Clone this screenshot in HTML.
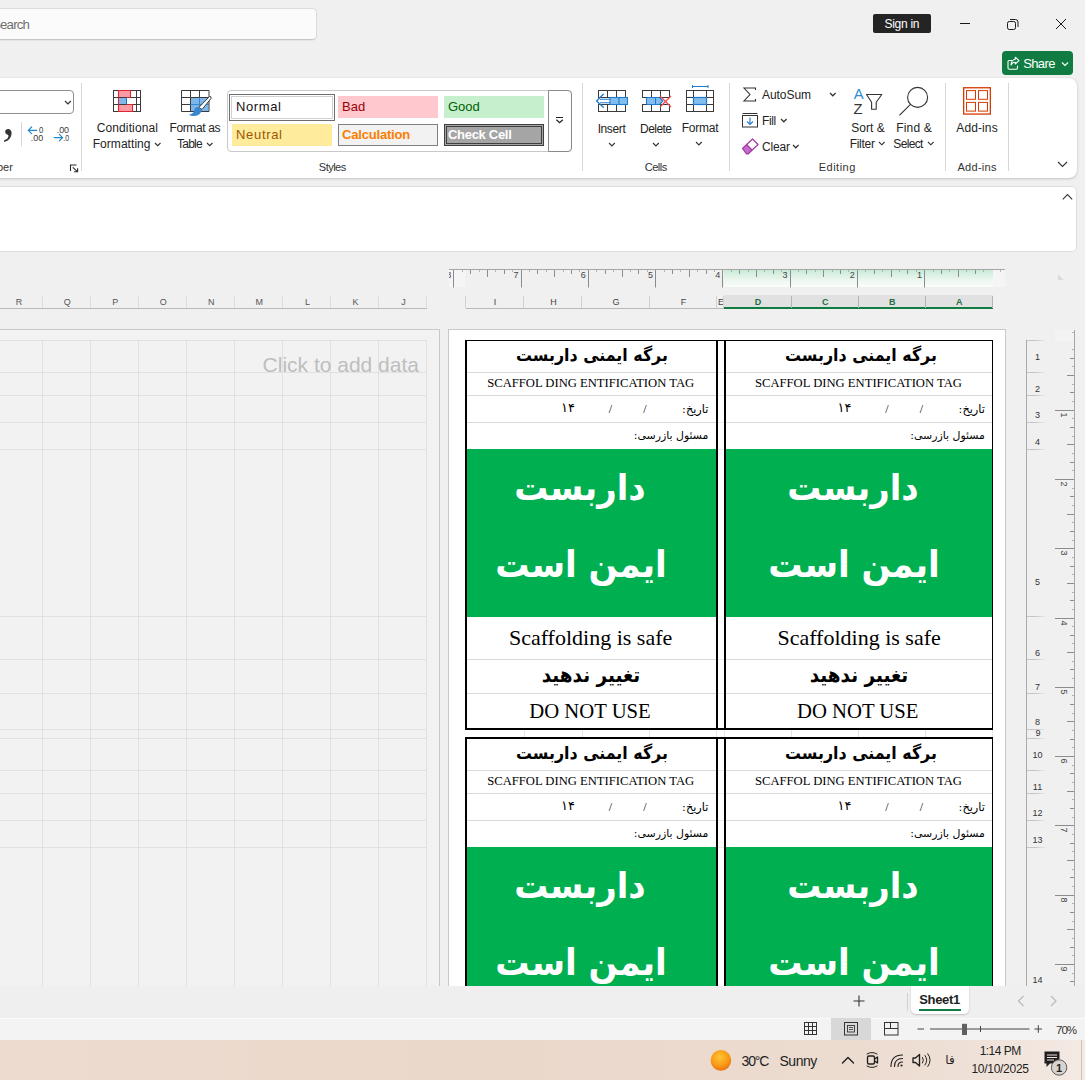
<!DOCTYPE html>
<html lang="en"><head><meta charset="utf-8"><title>Excel</title><style>
*{box-sizing:border-box;margin:0;padding:0}
html,body{width:1085px;height:1080px;overflow:hidden;background:#f0f0f0}
body{position:relative;font-family:"Liberation Sans","DejaVu Sans",sans-serif;font-size:12px;color:#242424}
div,svg{position:absolute}
.t{white-space:pre}
.fa{font-family:"DejaVu Sans",sans-serif;direction:rtl;unicode-bidi:plaintext}
.se{font-family:"Liberation Serif",serif}
svg{overflow:visible}
</style></head><body>
<div style="left:0px;top:0px;width:1085px;height:78px;background:#f0f0f0;"></div>
<div style="left:-10px;top:8px;width:327px;height:32px;background:#fbfbfb;border:1px solid #dcdcdc;border-bottom-color:#c6c6c6;border-radius:5px;box-shadow:0 1px 1px rgba(0,0,0,.05);"></div>
<div class="t" style="top:15.00px;line-height:19px;font-size:13.3px;color:#707070;letter-spacing:-0.828px;right:1055.83px;text-align:right;">Search</div>
<div style="left:873px;top:14px;width:58px;height:19px;background:#242424;border-radius:2px;"></div>
<div class="t" style="top:16.00px;line-height:17px;font-size:12px;color:#fff;letter-spacing:-0.282px;left:601.86px;width:600px;text-align:center;">Sign in</div>
<svg style="left:955px;top:14px" width="120" height="20" viewBox="955 14 120 20" fill="none" stroke="#1a1a1a" stroke-width="1"><path d="M960 23.5H970"/><rect x="1007.5" y="21.5" width="8" height="8" rx="1.8"/><path d="M1010 19.5H1015.5Q1018 19.5 1018 22V27"/><path d="M1056 19L1066 29M1066 19L1056 29"/></svg>
<div style="left:1002px;top:51px;width:71px;height:24px;background:#107c41;border-radius:4px;"></div>
<svg style="left:1006px;top:55px" width="18" height="17" viewBox="0 0 18 17" fill="none" stroke="#fff" stroke-width="1.1" stroke-linejoin="round" stroke-linecap="round"><path d="M5.5 5.5H3.2Q2 5.5 2 6.7V13Q2 14.2 3.2 14.2H10.3Q11.5 14.2 11.5 13V11"/><path d="M9.3 2.2L13 5.6L9.3 9V7.2Q6.4 7.2 5 10Q5.2 4.8 9.3 4.2Z"/></svg>
<div class="t" style="top:54.50px;line-height:18px;font-size:13px;color:#fff;letter-spacing:-0.623px;left:738.99px;width:600px;text-align:center;">Share</div>
<svg style="left:1061px;top:61px" width="8" height="6" viewBox="0 0 8 6" fill="none" stroke="#fff" stroke-width="1.1"><path d="M1 1.5L4 4.5L7 1.5"/></svg>
<div style="left:-10px;top:78px;width:1087px;height:99.8px;background:#fff;border-radius:8px;box-shadow:0 1px 3px rgba(0,0,0,.18),0 0 1px rgba(0,0,0,.12);"></div>
<div style="left:81.0px;top:83px;width:1px;height:88px;background:#d6d6d6;"></div>
<div style="left:582.0px;top:83px;width:1px;height:88px;background:#d6d6d6;"></div>
<div style="left:729.0px;top:83px;width:1px;height:88px;background:#d6d6d6;"></div>
<div style="left:945.0px;top:83px;width:1px;height:88px;background:#d6d6d6;"></div>
<div style="left:1008.0px;top:83px;width:1px;height:88px;background:#d6d6d6;"></div>
<div style="left:-10px;top:90px;width:84px;height:24px;border:1px solid #8f8f8f;border-radius:4px;background:#fff;"></div>
<svg style="left:63.7px;top:100.0px" width="7.8" height="4.9" viewBox="-1 -1 7.8 4.9" fill="none" stroke="#333" stroke-width="1.2"><path d="M0 0L2.9 2.9L5.8 0"/></svg>
<div class="t se" style="top:96.50px;line-height:40px;font-size:50px;color:#333;left:2.20px;text-align:left;font-family:"Liberation Serif",serif;font-weight:bold;">,</div>
<div style="left:21px;top:122px;width:1px;height:23.5px;background:#d6d6d6;"></div>
<svg style="left:26px;top:122px" width="48" height="22" viewBox="26 122 48 22"><g fill="none" stroke="#1e8bcd" stroke-width="1.2" stroke-linecap="round" stroke-linejoin="round"><path d="M28.4 130.3H36.8M31.6 127L28.3 130.3L31.6 133.6"/><path d="M54.2 137.6H62.4M59.3 134.3L62.6 137.6L59.3 140.9"/></g><g font-family="Liberation Sans,sans-serif" font-size="9.3" fill="#3b3b3b"><text x="39" y="132.5" textLength="4.3" lengthAdjust="spacingAndGlyphs">0</text><text x="30.8" y="141" textLength="12.4" lengthAdjust="spacingAndGlyphs">.00</text><text x="56.7" y="132.5" textLength="12.4" lengthAdjust="spacingAndGlyphs">.00</text><text x="63.3" y="141" textLength="5.8" lengthAdjust="spacingAndGlyphs">.0</text></g></svg>
<div class="t" style="top:160.00px;line-height:15px;font-size:11px;color:#333;letter-spacing:-0.025px;right:1072.22px;text-align:right;">Number</div>
<svg style="left:69px;top:164px" width="10" height="9" viewBox="0 0 10 9" fill="none" stroke="#2b2b2b" stroke-width="1.1"><path d="M1.5 7V1H7.5"/><path d="M3.8 3.4L8.5 7.6M8.6 4.2V7.8H5"/></svg>
<svg style="left:113px;top:90px" width="28" height="22" viewBox="0 0 28 22"><rect x="5.5" y="0.5" width="12" height="7" fill="#fc9aa5"/><rect x="5.5" y="7.5" width="8" height="7" fill="#7fb9ec"/><rect x="5.5" y="14.5" width="14" height="7" fill="#fc9aa5"/><g fill="none" stroke="#3b3b3b" stroke-width="1"><rect x="0.5" y="0.5" width="27" height="21"/><path d="M0.5 7.5H27.5M0.5 14.5H27.5M5.5 0.5V21.5M23.5 0.5V21.5"/></g><path d="M13.5 7.5V14.5" stroke="#1f6fc0" stroke-width="1" fill="none"/><path d="M5.5 7.5V0.5H17.5V7.5H13.5M13.5 14.5H19.5V21.5H5.5V14.5" fill="none" stroke="#e0262f" stroke-width="1.1"/><path d="M5.5 7.5V14.5" stroke="#e0262f" stroke-width="1.1"/></svg>
<div class="t" style="top:120.20px;line-height:17px;font-size:12px;color:#242424;letter-spacing:0.126px;left:-172.64px;width:600px;text-align:center;">Conditional</div>
<div class="t" style="top:136.10px;line-height:17px;font-size:12px;color:#242424;letter-spacing:0.050px;left:-178.38px;width:600px;text-align:center;">Formatting</div>
<svg style="left:153.8px;top:141.6px" width="7.5" height="4.75" viewBox="-1 -1 7.5 4.75" fill="none" stroke="#333" stroke-width="1.1"><path d="M0 0L2.75 2.75L5.5 0"/></svg>
<svg style="left:181px;top:90px" width="32" height="27" viewBox="0 0 32 27"><rect x="9.5" y="7.5" width="18" height="14" fill="#7db7ea"/><g fill="none" stroke="#3b3b3b" stroke-width="1"><path d="M0.5 0.5H28V21.5H0.5Z"/><path d="M0.5 7.5H28M0.5 14.5H28M9.5 0.5V21.5M18.5 0.5V21.5"/></g><path d="M9.5 14.5H28M18.5 7.5V21.5" stroke="#3a86cf" stroke-width="1" fill="none"/><path d="M28.5 6.5Q30.5 6 30 8.5L21 19.5L17.8 17.5Z" fill="#fff" stroke="#3b3b3b" stroke-width="1" stroke-linejoin="round"/><path d="M17.5 17.2L21 19.8Q19.5 25.5 13.5 26Q10 26.3 8 24.5Q12.5 24 13.2 20.5Q14.2 16.5 17.5 17.2Z" fill="#3a86cf"/></svg>
<div class="t" style="top:120.20px;line-height:17px;font-size:12px;color:#242424;letter-spacing:-0.377px;left:-105.19px;width:600px;text-align:center;">Format as</div>
<div class="t" style="top:136.10px;line-height:17px;font-size:12px;color:#242424;letter-spacing:-0.722px;left:-110.56px;width:600px;text-align:center;">Table</div>
<svg style="left:205.8px;top:141.6px" width="7.5" height="4.75" viewBox="-1 -1 7.5 4.75" fill="none" stroke="#333" stroke-width="1.1"><path d="M0 0L2.75 2.75L5.5 0"/></svg>
<div style="left:227px;top:90px;width:345px;height:62px;border:1px solid #c8c8c8;border-radius:4px;background:#fff;"></div>
<div style="left:548px;top:90px;width:24px;height:62px;border:1px solid #8a8a8a;border-radius:0 4px 4px 0;background:#fff;"></div>
<svg style="left:555px;top:116px" width="10" height="9" viewBox="0 0 10 9" fill="none" stroke="#222" stroke-width="1"><path d="M1 1.5H8.2" shape-rendering="crispEdges"/><path d="M1.4 3.8L4.6 6.8L7.8 3.8" stroke-width="1.2"/></svg>
<div style="left:229px;top:93.5px;width:106px;height:27px;border:1px solid #6e6e6e;box-shadow:inset 0 0 0 1px #fff,inset 0 0 0 2px #d0d0d0;background:#fff;"></div>
<div class="t" style="top:97.50px;line-height:18px;font-size:13px;color:#111;letter-spacing:0.621px;left:236.00px;text-align:left;">Normal</div>
<div style="left:338px;top:96px;width:100px;height:22px;background:#ffc7ce;"></div>
<div class="t" style="top:97.50px;line-height:18px;font-size:13px;color:#9c0006;left:342.00px;text-align:left;">Bad</div>
<div style="left:444px;top:96px;width:100px;height:22px;background:#c6efce;"></div>
<div class="t" style="top:97.50px;line-height:18px;font-size:13px;color:#006100;left:448.00px;text-align:left;">Good</div>
<div style="left:232px;top:123.5px;width:100px;height:22px;background:#ffeb9c;"></div>
<div class="t" style="top:126.00px;line-height:18px;font-size:13px;color:#9c5700;letter-spacing:0.682px;left:236.00px;text-align:left;">Neutral</div>
<div style="left:338px;top:123.5px;width:100px;height:22px;background:#f2f2f2;border:1px solid #7f7f7f;"></div>
<div class="t" style="top:126.00px;line-height:18px;font-size:13px;color:#fa7d00;letter-spacing:-0.187px;left:342.00px;text-align:left;font-weight:bold;">Calculation</div>
<div style="left:444px;top:123.5px;width:100px;height:22px;background:#a5a5a5;border:3px double #3f3f3f;"></div>
<div class="t" style="top:126.00px;line-height:18px;font-size:13px;color:#fff;letter-spacing:-0.297px;left:448.00px;text-align:left;font-weight:bold;">Check Cell</div>
<div class="t" style="top:160.00px;line-height:15px;font-size:11px;color:#333;letter-spacing:-0.531px;left:32.23px;width:600px;text-align:center;">Styles</div>
<svg style="left:594px;top:84px" width="36" height="30" viewBox="594 84 36 30"><g fill="none" stroke="#3a3a3a" stroke-width="1"><rect x="598.5" y="90.5" width="27" height="21"/><path d="M607.5 90.5V111.5M616.5 90.5V111.5M598.5 97.5H625.5M598.5 104.5H625.5"/></g><rect x="595" y="98" width="33" height="6" fill="#fff"/><rect x="610" y="97.5" width="17.5" height="7" fill="#84bdec" stroke="#1e7bd0" stroke-width="1.1"/><path d="M619 97.5V104.5" stroke="#1e7bd0" stroke-width="1.1"/><path d="M610 99.2H600M610 102.8H600" stroke="#1e7bd0" stroke-width="1.1" fill="none"/><path d="M603.3 94.2L596.6 101L603.3 107.2" fill="none" stroke="#1e7bd0" stroke-width="1.3" stroke-linecap="round" stroke-linejoin="round"/></svg>
<div class="t" style="top:121.00px;line-height:17px;font-size:12px;color:#242424;letter-spacing:-0.382px;left:311.51px;width:600px;text-align:center;">Insert</div>
<svg style="left:607.6px;top:141.9px" width="7.8" height="4.9" viewBox="-1 -1 7.8 4.9" fill="none" stroke="#333" stroke-width="1.1"><path d="M0 0L2.9 2.9L5.8 0"/></svg>
<svg style="left:638px;top:84px" width="36" height="30" viewBox="638 84 36 30"><g fill="none" stroke="#3a3a3a" stroke-width="1"><rect x="642.5" y="90.5" width="27" height="21"/><path d="M651.5 90.5V111.5M660.5 90.5V111.5M642.5 97.5H669.5M642.5 104.5H669.5"/></g><rect x="640" y="98" width="33" height="6" fill="#fff"/><path d="M646.5 97.5H659.5L662.8 101L659.5 104.5H646.5Z" fill="#84bdec" stroke="#1e7bd0" stroke-width="1.1" stroke-linejoin="round"/><path d="M655.5 97.5V104.5" stroke="#1e7bd0" stroke-width="1.1"/><path d="M642.5 97.5H646.5M642.5 104.5H646.5" stroke="#3a3a3a" stroke-width="1"/><path d="M660 96L671 107M671 96L660 107" stroke="#f0484a" stroke-width="1.3" fill="none"/></svg>
<div class="t" style="top:121.00px;line-height:17px;font-size:12px;color:#242424;letter-spacing:-0.558px;left:355.72px;width:600px;text-align:center;">Delete</div>
<svg style="left:651.5px;top:141.9px" width="7.8" height="4.9" viewBox="-1 -1 7.8 4.9" fill="none" stroke="#333" stroke-width="1.1"><path d="M0 0L2.9 2.9L5.8 0"/></svg>
<svg style="left:684px;top:84px" width="32" height="30" viewBox="684 84 32 30"><g fill="none" stroke="#3a3a3a" stroke-width="1"><rect x="686.5" y="90.5" width="27" height="21"/><path d="M693.5 90.5V111.5M706.5 90.5V111.5M686.5 97.5H713.5M686.5 104.5H713.5"/></g><rect x="693.5" y="97.5" width="13" height="7" fill="#84bdec" stroke="#1e7bd0" stroke-width="1.2"/><path d="M692.5 86.5H708M692.5 85V88M708 85V88" stroke="#1e7bd0" stroke-width="1" fill="none"/></svg>
<div class="t" style="top:120.00px;line-height:17px;font-size:12px;color:#242424;letter-spacing:-0.221px;left:400.09px;width:600px;text-align:center;">Format</div>
<svg style="left:695.4px;top:140.7px" width="7.8" height="4.9" viewBox="-1 -1 7.8 4.9" fill="none" stroke="#333" stroke-width="1.1"><path d="M0 0L2.9 2.9L5.8 0"/></svg>
<div class="t" style="top:160.00px;line-height:15px;font-size:11px;color:#333;letter-spacing:-0.438px;left:355.78px;width:600px;text-align:center;">Cells</div>
<svg style="left:742px;top:87px" width="16" height="15" viewBox="0 0 16 15" fill="none" stroke="#333" stroke-width="1.1" stroke-linejoin="miter"><path d="M13.5 3V1H2L8 7.5L2 14H13.5V12"/></svg>
<div class="t" style="top:87.00px;line-height:17px;font-size:12px;color:#242424;letter-spacing:-0.060px;left:762.00px;text-align:left;">AutoSum</div>
<svg style="left:828.7px;top:91.9px" width="7.6" height="4.8" viewBox="-1 -1 7.6 4.8" fill="none" stroke="#333" stroke-width="1.2"><path d="M0 0L2.8 2.8L5.6 0"/></svg>
<svg style="left:742px;top:113px" width="17" height="15" viewBox="0 0 17 15" fill="none"><path d="M0.5 0.5H15.5" stroke="#333"/><rect x="0.5" y="2.5" width="15" height="11.5" stroke="#333"/><path d="M8 4.5V11.5M5 8.5L8 11.5L11 8.5" stroke="#2f7fcb" stroke-width="1.2"/></svg>
<div class="t" style="top:113.00px;line-height:17px;font-size:12px;color:#242424;letter-spacing:-0.376px;left:762.00px;text-align:left;">Fill</div>
<svg style="left:780.1px;top:117.9px" width="7.6" height="4.8" viewBox="-1 -1 7.6 4.8" fill="none" stroke="#333" stroke-width="1.2"><path d="M0 0L2.8 2.8L5.6 0"/></svg>
<svg style="left:741px;top:138px" width="19" height="17" viewBox="0 0 19 17"><path d="M1.5 10.5L5.5 6.5L11 12L7 16H5.5Z" fill="#c46bd0"/><path d="M1.5 10.5L11.5 1L17 6.5L7 16H5.5Z" fill="none" stroke="#a4359f" stroke-width="1.2" stroke-linejoin="round"/><path d="M5.5 6.5L11 12" stroke="#a4359f" stroke-width="1.1"/></svg>
<div class="t" style="top:139.00px;line-height:17px;font-size:12px;color:#242424;letter-spacing:-0.194px;left:762.00px;text-align:left;">Clear</div>
<svg style="left:791.8px;top:144.0px" width="7.6" height="4.8" viewBox="-1 -1 7.6 4.8" fill="none" stroke="#333" stroke-width="1.2"><path d="M0 0L2.8 2.8L5.6 0"/></svg>
<svg style="left:850px;top:84px" width="36" height="34" viewBox="850 84 36 34"><text x="853.7" y="99.2" font-family="Liberation Sans,sans-serif" font-size="14.8" fill="#2f8bd6">A</text><text x="853.6" y="113.9" font-family="Liberation Sans,sans-serif" font-size="14.8" fill="#333">Z</text><path d="M866.5 94.5H881.8L876.2 102.3V109.3H871.6V102.3Z" fill="none" stroke="#333" stroke-width="1.1" stroke-linejoin="round"/></svg>
<div class="t" style="top:120.00px;line-height:17px;font-size:12px;color:#242424;letter-spacing:0.051px;left:568.03px;width:600px;text-align:center;">Sort &amp;</div>
<div class="t" style="top:136.00px;line-height:17px;font-size:12px;color:#242424;letter-spacing:-0.293px;left:562.15px;width:600px;text-align:center;">Filter</div>
<svg style="left:877.6px;top:141.2px" width="7.6" height="4.8" viewBox="-1 -1 7.6 4.8" fill="none" stroke="#333" stroke-width="1.1"><path d="M0 0L2.8 2.8L5.6 0"/></svg>
<svg style="left:896px;top:84px" width="36" height="34" viewBox="896 84 36 34"><g fill="none" stroke="#333" stroke-width="1.1"><circle cx="917.6" cy="97.4" r="10"/><path d="M910.2 104.6L899.4 115.3"/></g></svg>
<div class="t" style="top:120.00px;line-height:17px;font-size:12px;color:#242424;letter-spacing:0.143px;left:614.07px;width:600px;text-align:center;">Find &amp;</div>
<div class="t" style="top:136.00px;line-height:17px;font-size:12px;color:#242424;letter-spacing:-0.650px;left:608.07px;width:600px;text-align:center;">Select</div>
<svg style="left:926.7px;top:141.2px" width="7.6" height="4.8" viewBox="-1 -1 7.6 4.8" fill="none" stroke="#333" stroke-width="1.1"><path d="M0 0L2.8 2.8L5.6 0"/></svg>
<div class="t" style="top:160.00px;line-height:15px;font-size:11px;color:#333;letter-spacing:0.494px;left:537.25px;width:600px;text-align:center;">Editing</div>
<svg style="left:962px;top:86px" width="30" height="30" viewBox="962 86 30 30"><g fill="none" stroke="#d83b01"><rect x="963.65" y="87.75" width="26.7" height="26.3" stroke-width="1.3"/><rect x="966.5" y="90.6" width="9" height="8.7"/><rect x="978.5" y="90.6" width="9" height="8.7"/><rect x="966.5" y="102.4" width="9" height="8.7"/><rect x="978.5" y="102.4" width="9" height="8.7"/></g></svg>
<div class="t" style="top:120.00px;line-height:17px;font-size:12px;color:#242424;letter-spacing:0.102px;left:677.05px;width:600px;text-align:center;">Add-ins</div>
<div class="t" style="top:160.00px;line-height:15px;font-size:11px;color:#333;letter-spacing:0.300px;left:677.15px;width:600px;text-align:center;">Add-ins</div>
<svg style="left:1056.5px;top:161.2px" width="11" height="6.5" viewBox="-1 -1 11 6.5" fill="none" stroke="#333" stroke-width="1.1"><path d="M0 0L4.5 4.5L9 0"/></svg>
<div style="left:-10px;top:186px;width:1087px;height:66px;background:#fff;border:1px solid #dedede;border-radius:5px;"></div>
<svg style="left:1061px;top:192px" width="13" height="9" viewBox="0 0 13 9" fill="none" stroke="#333" stroke-width="1.1"><path d="M1.8 7.3L6.5 2.6L11.2 7.3"/></svg>
<div style="left:0px;top:252px;width:1085px;height:734px;background:#f0f0f0;"></div>
<div style="left:-10px;top:329px;width:450px;height:670px;background:#f2f2f2;border:1px solid #c8c8c8;"></div>
<svg style="left:0;top:329px" width="440" height="657" viewBox="0 329 440 657" fill="none" stroke="#e1e1e1" stroke-width="1"><path d="M426.5 340V986"/><path d="M378.5 340V986"/><path d="M330.5 340V986"/><path d="M282.5 340V986"/><path d="M234.5 340V986"/><path d="M186.5 340V986"/><path d="M138.5 340V986"/><path d="M90.5 340V986"/><path d="M42.5 340V986"/><path d="M-5.5 340V986"/><path d="M0 340.5H427"/><path d="M0 372.5H427"/><path d="M0 395.5H427"/><path d="M0 422.5H427"/><path d="M0 449.5H427"/><path d="M0 616.5H427"/><path d="M0 659.5H427"/><path d="M0 693.5H427"/><path d="M0 729.5H427"/><path d="M0 738.5H427"/><path d="M0 770.5H427"/><path d="M0 793.5H427"/><path d="M0 820.5H427"/><path d="M0 847.5H427"/></svg>
<div class="t" style="top:350.70px;line-height:28px;font-size:21px;color:#bebebe;right:666.00px;text-align:right;">Click to add data</div>
<div style="left:0px;top:308px;width:427px;height:1px;background:#b9b9b9;"></div>
<div class="t" style="top:296.00px;line-height:12px;font-size:9px;color:#555;left:103.50px;width:600px;text-align:center;">J</div>
<div style="left:426px;top:296px;width:1px;height:12px;background:#dcdcdc;"></div>
<div class="t" style="top:296.00px;line-height:12px;font-size:9px;color:#555;left:55.45px;width:600px;text-align:center;">K</div>
<div style="left:378px;top:296px;width:1px;height:12px;background:#dcdcdc;"></div>
<div class="t" style="top:296.00px;line-height:12px;font-size:9px;color:#555;left:7.40px;width:600px;text-align:center;">L</div>
<div style="left:330px;top:296px;width:1px;height:12px;background:#dcdcdc;"></div>
<div class="t" style="top:296.00px;line-height:12px;font-size:9px;color:#555;left:-40.65px;width:600px;text-align:center;">M</div>
<div style="left:282px;top:296px;width:1px;height:12px;background:#dcdcdc;"></div>
<div class="t" style="top:296.00px;line-height:12px;font-size:9px;color:#555;left:-88.70px;width:600px;text-align:center;">N</div>
<div style="left:234px;top:296px;width:1px;height:12px;background:#dcdcdc;"></div>
<div class="t" style="top:296.00px;line-height:12px;font-size:9px;color:#555;left:-136.75px;width:600px;text-align:center;">O</div>
<div style="left:186px;top:296px;width:1px;height:12px;background:#dcdcdc;"></div>
<div class="t" style="top:296.00px;line-height:12px;font-size:9px;color:#555;left:-184.80px;width:600px;text-align:center;">P</div>
<div style="left:138px;top:296px;width:1px;height:12px;background:#dcdcdc;"></div>
<div class="t" style="top:296.00px;line-height:12px;font-size:9px;color:#555;left:-232.85px;width:600px;text-align:center;">Q</div>
<div style="left:90px;top:296px;width:1px;height:12px;background:#dcdcdc;"></div>
<div class="t" style="top:296.00px;line-height:12px;font-size:9px;color:#555;left:-280.90px;width:600px;text-align:center;">R</div>
<div style="left:42px;top:296px;width:1px;height:12px;background:#dcdcdc;"></div>
<div style="left:448px;top:329px;width:558px;height:670px;background:#fff;border:1px solid #c8c8c8;"></div>
<div style="left:449px;top:269px;width:16px;height:18px;background:#f5f5f5;"></div>
<div style="left:993px;top:269px;width:12px;height:18px;background:#f5f5f5;"></div>
<div style="left:724px;top:270px;width:268.5px;height:17px;background:linear-gradient(#c9ead7,#eaf6ee 55%,#fbfdfb);"></div>
<div style="left:449px;top:269px;width:556px;height:1px;background:#a6a6a6;"></div>
<svg style="left:449px;top:269px" width="556" height="18" viewBox="449 269 556 18" fill="none" stroke="#8c8c8c" stroke-width="1"><path d="M1000.5 270V272" stroke="#b4b4b4"/><path d="M983.5 270V272" stroke="#b4b4b4"/><path d="M975.5 270V274"/><path d="M966.5 270V272" stroke="#b4b4b4"/><path d="M958.5 270V277"/><path d="M949.5 270V272" stroke="#b4b4b4"/><path d="M941.5 270V274"/><path d="M933.5 270V272" stroke="#b4b4b4"/><path d="M924.5 270V287.5"/><path d="M916.5 270V272" stroke="#b4b4b4"/><path d="M907.5 270V274"/><path d="M899.5 270V272" stroke="#b4b4b4"/><path d="M891.5 270V277"/><path d="M882.5 270V272" stroke="#b4b4b4"/><path d="M874.5 270V274"/><path d="M865.5 270V272" stroke="#b4b4b4"/><path d="M857.5 270V287.5"/><path d="M848.5 270V272" stroke="#b4b4b4"/><path d="M840.5 270V274"/><path d="M832.5 270V272" stroke="#b4b4b4"/><path d="M823.5 270V277"/><path d="M815.5 270V272" stroke="#b4b4b4"/><path d="M806.5 270V274"/><path d="M798.5 270V272" stroke="#b4b4b4"/><path d="M790.5 270V287.5"/><path d="M781.5 270V272" stroke="#b4b4b4"/><path d="M773.5 270V274"/><path d="M764.5 270V272" stroke="#b4b4b4"/><path d="M756.5 270V277"/><path d="M748.5 270V272" stroke="#b4b4b4"/><path d="M739.5 270V274"/><path d="M731.5 270V272" stroke="#b4b4b4"/><path d="M722.5 270V287.5"/><path d="M714.5 270V272" stroke="#b4b4b4"/><path d="M706.5 270V274"/><path d="M697.5 270V272" stroke="#b4b4b4"/><path d="M689.5 270V277"/><path d="M680.5 270V272" stroke="#b4b4b4"/><path d="M672.5 270V274"/><path d="M664.5 270V272" stroke="#b4b4b4"/><path d="M655.5 270V287.5"/><path d="M647.5 270V272" stroke="#b4b4b4"/><path d="M638.5 270V274"/><path d="M630.5 270V272" stroke="#b4b4b4"/><path d="M622.5 270V277"/><path d="M613.5 270V272" stroke="#b4b4b4"/><path d="M605.5 270V274"/><path d="M596.5 270V272" stroke="#b4b4b4"/><path d="M588.5 270V287.5"/><path d="M579.5 270V272" stroke="#b4b4b4"/><path d="M571.5 270V274"/><path d="M563.5 270V272" stroke="#b4b4b4"/><path d="M554.5 270V277"/><path d="M546.5 270V272" stroke="#b4b4b4"/><path d="M537.5 270V274"/><path d="M529.5 270V272" stroke="#b4b4b4"/><path d="M521.5 270V287.5"/><path d="M512.5 270V272" stroke="#b4b4b4"/><path d="M504.5 270V274"/><path d="M495.5 270V272" stroke="#b4b4b4"/><path d="M487.5 270V277"/><path d="M479.5 270V272" stroke="#b4b4b4"/><path d="M470.5 270V274"/><path d="M462.5 270V272" stroke="#b4b4b4"/><path d="M453.5 270V287.5"/></svg>
<div style="left:449px;top:269px;width:556px;height:18px;overflow:hidden"><div style="left:-449px;top:-269px;width:1085px;height:400px">
<div class="t" style="top:269.00px;line-height:12px;font-size:9px;color:#444;left:619.45px;width:600px;text-align:center;">1</div>
<div class="t" style="top:269.00px;line-height:12px;font-size:9px;color:#444;left:552.20px;width:600px;text-align:center;">2</div>
<div class="t" style="top:269.00px;line-height:12px;font-size:9px;color:#444;left:484.95px;width:600px;text-align:center;">3</div>
<div class="t" style="top:269.00px;line-height:12px;font-size:9px;color:#444;left:417.70px;width:600px;text-align:center;">4</div>
<div class="t" style="top:269.00px;line-height:12px;font-size:9px;color:#444;left:350.45px;width:600px;text-align:center;">5</div>
<div class="t" style="top:269.00px;line-height:12px;font-size:9px;color:#444;left:283.20px;width:600px;text-align:center;">6</div>
<div class="t" style="top:269.00px;line-height:12px;font-size:9px;color:#444;left:215.95px;width:600px;text-align:center;">7</div>
<div class="t" style="top:269.00px;line-height:12px;font-size:9px;color:#444;left:148.70px;width:600px;text-align:center;">8</div>
</div></div>
<div style="left:466px;top:308px;width:527px;height:1px;background:#b9b9b9;"></div>
<div style="left:724px;top:295px;width:269px;height:12px;background:#e1e1e1;"></div>
<div style="left:724px;top:307px;width:269px;height:2px;background:#107c41;"></div>
<div class="t" style="top:295.50px;line-height:12px;font-size:9px;color:#1e6f43;left:659.25px;width:600px;text-align:center;font-weight:bold;">A</div>
<div style="left:992px;top:296px;width:1px;height:12px;background:#b5b5b5;"></div>
<div class="t" style="top:295.50px;line-height:12px;font-size:9px;color:#1e6f43;left:592.20px;width:600px;text-align:center;font-weight:bold;">B</div>
<div style="left:925px;top:296px;width:1px;height:12px;background:#b5b5b5;"></div>
<div class="t" style="top:295.50px;line-height:12px;font-size:9px;color:#1e6f43;left:525.15px;width:600px;text-align:center;font-weight:bold;">C</div>
<div style="left:858px;top:296px;width:1px;height:12px;background:#b5b5b5;"></div>
<div class="t" style="top:295.50px;line-height:12px;font-size:9px;color:#1e6f43;left:458.00px;width:600px;text-align:center;font-weight:bold;">D</div>
<div style="left:791px;top:296px;width:1px;height:12px;background:#b5b5b5;"></div>
<div class="t" style="top:296.00px;line-height:12px;font-size:9px;color:#444;left:421.00px;width:600px;text-align:center;">E</div>
<div style="left:723px;top:296px;width:1px;height:12px;background:#d2d2d2;"></div>
<div class="t" style="top:296.00px;line-height:12px;font-size:9px;color:#444;left:383.40px;width:600px;text-align:center;">F</div>
<div style="left:716px;top:296px;width:1px;height:12px;background:#d2d2d2;"></div>
<div class="t" style="top:296.00px;line-height:12px;font-size:9px;color:#444;left:316.00px;width:600px;text-align:center;">G</div>
<div style="left:649px;top:296px;width:1px;height:12px;background:#d2d2d2;"></div>
<div class="t" style="top:296.00px;line-height:12px;font-size:9px;color:#444;left:253.50px;width:600px;text-align:center;">H</div>
<div style="left:581px;top:296px;width:1px;height:12px;background:#d2d2d2;"></div>
<div class="t" style="top:296.00px;line-height:12px;font-size:9px;color:#444;left:195.10px;width:600px;text-align:center;">I</div>
<div style="left:523px;top:296px;width:1px;height:12px;background:#d2d2d2;"></div>
<div style="left:465px;top:296px;width:1px;height:12px;background:#d2d2d2;"></div>
<svg style="left:1058px;top:274px" width="6" height="6" viewBox="0 0 6 6"><path d="M0 0.3L5.5 6H0Z" fill="#dadada"/></svg>
<div style="left:0;top:252px;width:1085px;height:734px;overflow:hidden"><div style="left:0;top:-252px;width:1085px;height:1080px">
<div style="left:467px;top:372px;width:249px;height:1px;background:#dadada;"></div>
<div style="left:726px;top:372px;width:266px;height:1px;background:#dadada;"></div>
<div style="left:718px;top:372px;width:6px;height:1px;background:#ececec;"></div>
<div style="left:467px;top:395px;width:249px;height:1px;background:#dadada;"></div>
<div style="left:726px;top:395px;width:266px;height:1px;background:#dadada;"></div>
<div style="left:718px;top:395px;width:6px;height:1px;background:#ececec;"></div>
<div style="left:467px;top:422px;width:249px;height:1px;background:#dadada;"></div>
<div style="left:726px;top:422px;width:266px;height:1px;background:#dadada;"></div>
<div style="left:718px;top:422px;width:6px;height:1px;background:#ececec;"></div>
<div style="left:467px;top:449px;width:249px;height:1px;background:#dadada;"></div>
<div style="left:726px;top:449px;width:266px;height:1px;background:#dadada;"></div>
<div style="left:718px;top:449px;width:6px;height:1px;background:#ececec;"></div>
<div style="left:467px;top:659px;width:249px;height:1px;background:#dadada;"></div>
<div style="left:726px;top:659px;width:266px;height:1px;background:#dadada;"></div>
<div style="left:718px;top:659px;width:6px;height:1px;background:#ececec;"></div>
<div style="left:467px;top:693px;width:249px;height:1px;background:#dadada;"></div>
<div style="left:726px;top:693px;width:266px;height:1px;background:#dadada;"></div>
<div style="left:718px;top:693px;width:6px;height:1px;background:#ececec;"></div>
<div style="left:467px;top:449px;width:249px;height:168px;background:#00b050;"></div>
<div style="left:726px;top:449px;width:266px;height:168px;background:#00b050;"></div>
<div style="left:467px;top:770px;width:249px;height:1px;background:#dadada;"></div>
<div style="left:726px;top:770px;width:266px;height:1px;background:#dadada;"></div>
<div style="left:718px;top:770px;width:6px;height:1px;background:#ececec;"></div>
<div style="left:467px;top:793px;width:249px;height:1px;background:#dadada;"></div>
<div style="left:726px;top:793px;width:266px;height:1px;background:#dadada;"></div>
<div style="left:718px;top:793px;width:6px;height:1px;background:#ececec;"></div>
<div style="left:467px;top:820px;width:249px;height:1px;background:#dadada;"></div>
<div style="left:726px;top:820px;width:266px;height:1px;background:#dadada;"></div>
<div style="left:718px;top:820px;width:6px;height:1px;background:#ececec;"></div>
<div style="left:467px;top:847px;width:249px;height:1px;background:#dadada;"></div>
<div style="left:726px;top:847px;width:266px;height:1px;background:#dadada;"></div>
<div style="left:718px;top:847px;width:6px;height:1px;background:#ececec;"></div>
<div style="left:467px;top:847px;width:249px;height:139px;background:#00b050;"></div>
<div style="left:726px;top:847px;width:266px;height:139px;background:#00b050;"></div>
<div style="left:524px;top:730px;width:1px;height:7px;background:#e4e4e4;"></div>
<div style="left:582px;top:730px;width:1px;height:7px;background:#e4e4e4;"></div>
<div style="left:649px;top:730px;width:1px;height:7px;background:#e4e4e4;"></div>
<div style="left:716px;top:730px;width:1px;height:7px;background:#e4e4e4;"></div>
<div style="left:724px;top:730px;width:1px;height:7px;background:#e4e4e4;"></div>
<div style="left:791px;top:730px;width:1px;height:7px;background:#e4e4e4;"></div>
<div style="left:858px;top:730px;width:1px;height:7px;background:#e4e4e4;"></div>
<div style="left:925px;top:730px;width:1px;height:7px;background:#e4e4e4;"></div>
<div style="left:992px;top:730px;width:1px;height:7px;background:#e4e4e4;"></div>
<div style="left:465px;top:340px;width:528px;height:1px;background:#000;"></div>
<div style="left:465px;top:728px;width:528px;height:2px;background:#000;"></div>
<div style="left:465px;top:737px;width:528px;height:2px;background:#000;"></div>
<div style="left:465px;top:340px;width:2px;height:390px;background:#000;"></div>
<div style="left:465px;top:737px;width:2px;height:260px;background:#000;"></div>
<div style="left:716px;top:340px;width:2px;height:390px;background:#000;"></div>
<div style="left:716px;top:737px;width:2px;height:260px;background:#000;"></div>
<div style="left:724px;top:340px;width:2px;height:390px;background:#000;"></div>
<div style="left:724px;top:737px;width:2px;height:260px;background:#000;"></div>
<div style="left:992px;top:340px;width:1px;height:390px;background:#000;"></div>
<div style="left:992px;top:737px;width:1px;height:260px;background:#000;"></div>
<div class="t fa" style="top:341.80px;line-height:26px;font-size:17.3px;color:#000;font-weight:bold;left:292.00px;width:600px;text-align:center;transform:scaleX(0.918);transform-origin:center center;">برگه ایمنی داربست</div>
<div class="t se" style="top:374.20px;line-height:19px;font-size:12.64px;color:#000;left:290.70px;width:600px;text-align:center;">SCAFFOL DING ENTIFICATION TAG</div>
<div class="t fa" style="top:400.50px;line-height:17px;font-size:11.3px;color:#000;right:376.60px;text-align:right;">تاریخ:</div>
<div class="t se" style="top:399.50px;line-height:18px;font-size:12px;color:#000;left:345.00px;width:600px;text-align:center;">/</div>
<div class="t se" style="top:399.50px;line-height:18px;font-size:12px;color:#000;left:310.30px;width:600px;text-align:center;">/</div>
<div class="t fa" style="top:398.00px;line-height:20px;font-size:13px;color:#000;right:510.10px;text-align:right;">۱۴</div>
<div class="t fa" style="top:427.50px;line-height:16px;font-size:10.9px;color:#000;right:376.60px;text-align:right;">مسئول بازرسی:</div>
<div class="t fa" style="top:461.20px;line-height:53px;font-size:35.5px;color:#fff;font-weight:bold;left:279.90px;width:600px;text-align:center;transform:scaleX(0.954);transform-origin:center center;">داربست</div>
<div class="t fa" style="top:536.80px;line-height:55px;font-size:36.5px;color:#fff;font-weight:bold;left:280.85px;width:600px;text-align:center;transform:scaleX(0.936);transform-origin:center center;">ایمن است</div>
<div class="t se" style="top:621.30px;line-height:33px;font-size:22px;color:#000;left:290.60px;width:600px;text-align:center;">Scaffolding is safe</div>
<div class="t fa" style="top:658.50px;line-height:32px;font-size:21px;color:#000;font-weight:bold;left:291.00px;width:600px;text-align:center;transform:scaleX(0.875);transform-origin:center center;">تغییر ندهید</div>
<div class="t se" style="top:696.20px;line-height:31px;font-size:20.7px;color:#000;left:290.00px;width:600px;text-align:center;">DO NOT USE</div>
<div class="t fa" style="top:341.80px;line-height:26px;font-size:17.3px;color:#000;font-weight:bold;left:560.60px;width:600px;text-align:center;transform:scaleX(0.918);transform-origin:center center;">برگه ایمنی داربست</div>
<div class="t se" style="top:374.20px;line-height:19px;font-size:12.64px;color:#000;left:558.50px;width:600px;text-align:center;">SCAFFOL DING ENTIFICATION TAG</div>
<div class="t fa" style="top:400.50px;line-height:17px;font-size:11.3px;color:#000;right:100.10px;text-align:right;">تاریخ:</div>
<div class="t se" style="top:399.50px;line-height:18px;font-size:12px;color:#000;left:621.50px;width:600px;text-align:center;">/</div>
<div class="t se" style="top:399.50px;line-height:18px;font-size:12px;color:#000;left:586.80px;width:600px;text-align:center;">/</div>
<div class="t fa" style="top:398.00px;line-height:20px;font-size:13px;color:#000;right:233.60px;text-align:right;">۱۴</div>
<div class="t fa" style="top:427.50px;line-height:16px;font-size:10.9px;color:#000;right:100.10px;text-align:right;">مسئول بازرسی:</div>
<div class="t fa" style="top:461.20px;line-height:53px;font-size:35.5px;color:#fff;font-weight:bold;left:553.00px;width:600px;text-align:center;transform:scaleX(0.954);transform-origin:center center;">داربست</div>
<div class="t fa" style="top:536.80px;line-height:55px;font-size:36.5px;color:#fff;font-weight:bold;left:553.60px;width:600px;text-align:center;transform:scaleX(0.936);transform-origin:center center;">ایمن است</div>
<div class="t se" style="top:621.30px;line-height:33px;font-size:22px;color:#000;left:559.10px;width:600px;text-align:center;">Scaffolding is safe</div>
<div class="t fa" style="top:658.50px;line-height:32px;font-size:21px;color:#000;font-weight:bold;left:559.10px;width:600px;text-align:center;transform:scaleX(0.875);transform-origin:center center;">تغییر ندهید</div>
<div class="t se" style="top:696.20px;line-height:31px;font-size:20.7px;color:#000;left:557.70px;width:600px;text-align:center;">DO NOT USE</div>
<div class="t fa" style="top:739.80px;line-height:26px;font-size:17.3px;color:#000;font-weight:bold;left:292.00px;width:600px;text-align:center;transform:scaleX(0.918);transform-origin:center center;">برگه ایمنی داربست</div>
<div class="t se" style="top:772.20px;line-height:19px;font-size:12.64px;color:#000;left:290.70px;width:600px;text-align:center;">SCAFFOL DING ENTIFICATION TAG</div>
<div class="t fa" style="top:798.50px;line-height:17px;font-size:11.3px;color:#000;right:376.60px;text-align:right;">تاریخ:</div>
<div class="t se" style="top:797.50px;line-height:18px;font-size:12px;color:#000;left:345.00px;width:600px;text-align:center;">/</div>
<div class="t se" style="top:797.50px;line-height:18px;font-size:12px;color:#000;left:310.30px;width:600px;text-align:center;">/</div>
<div class="t fa" style="top:796.00px;line-height:20px;font-size:13px;color:#000;right:510.10px;text-align:right;">۱۴</div>
<div class="t fa" style="top:825.50px;line-height:16px;font-size:10.9px;color:#000;right:376.60px;text-align:right;">مسئول بازرسی:</div>
<div class="t fa" style="top:859.20px;line-height:53px;font-size:35.5px;color:#fff;font-weight:bold;left:279.90px;width:600px;text-align:center;transform:scaleX(0.954);transform-origin:center center;">داربست</div>
<div class="t fa" style="top:934.80px;line-height:55px;font-size:36.5px;color:#fff;font-weight:bold;left:280.85px;width:600px;text-align:center;transform:scaleX(0.936);transform-origin:center center;">ایمن است</div>
<div class="t fa" style="top:739.80px;line-height:26px;font-size:17.3px;color:#000;font-weight:bold;left:560.60px;width:600px;text-align:center;transform:scaleX(0.918);transform-origin:center center;">برگه ایمنی داربست</div>
<div class="t se" style="top:772.20px;line-height:19px;font-size:12.64px;color:#000;left:558.50px;width:600px;text-align:center;">SCAFFOL DING ENTIFICATION TAG</div>
<div class="t fa" style="top:798.50px;line-height:17px;font-size:11.3px;color:#000;right:100.10px;text-align:right;">تاریخ:</div>
<div class="t se" style="top:797.50px;line-height:18px;font-size:12px;color:#000;left:621.50px;width:600px;text-align:center;">/</div>
<div class="t se" style="top:797.50px;line-height:18px;font-size:12px;color:#000;left:586.80px;width:600px;text-align:center;">/</div>
<div class="t fa" style="top:796.00px;line-height:20px;font-size:13px;color:#000;right:233.60px;text-align:right;">۱۴</div>
<div class="t fa" style="top:825.50px;line-height:16px;font-size:10.9px;color:#000;right:100.10px;text-align:right;">مسئول بازرسی:</div>
<div class="t fa" style="top:859.20px;line-height:53px;font-size:35.5px;color:#fff;font-weight:bold;left:553.00px;width:600px;text-align:center;transform:scaleX(0.954);transform-origin:center center;">داربست</div>
<div class="t fa" style="top:934.80px;line-height:55px;font-size:36.5px;color:#fff;font-weight:bold;left:553.60px;width:600px;text-align:center;transform:scaleX(0.936);transform-origin:center center;">ایمن است</div>
</div></div>
<div style="left:1026px;top:340px;width:1px;height:646px;background:#a9a9a9;"></div>
<div style="left:1027px;top:340px;width:20px;height:1px;background:linear-gradient(90deg,#c4c4c4,#c4c4c4 40%,rgba(196,196,196,0));"></div>
<div style="left:1027px;top:372px;width:20px;height:1px;background:linear-gradient(90deg,#c4c4c4,#c4c4c4 40%,rgba(196,196,196,0));"></div>
<div style="left:1027px;top:395px;width:20px;height:1px;background:linear-gradient(90deg,#c4c4c4,#c4c4c4 40%,rgba(196,196,196,0));"></div>
<div style="left:1027px;top:422px;width:20px;height:1px;background:linear-gradient(90deg,#c4c4c4,#c4c4c4 40%,rgba(196,196,196,0));"></div>
<div style="left:1027px;top:449px;width:20px;height:1px;background:linear-gradient(90deg,#c4c4c4,#c4c4c4 40%,rgba(196,196,196,0));"></div>
<div style="left:1027px;top:616px;width:20px;height:1px;background:linear-gradient(90deg,#c4c4c4,#c4c4c4 40%,rgba(196,196,196,0));"></div>
<div style="left:1027px;top:659px;width:20px;height:1px;background:linear-gradient(90deg,#c4c4c4,#c4c4c4 40%,rgba(196,196,196,0));"></div>
<div style="left:1027px;top:693px;width:20px;height:1px;background:linear-gradient(90deg,#c4c4c4,#c4c4c4 40%,rgba(196,196,196,0));"></div>
<div style="left:1027px;top:729px;width:20px;height:1px;background:linear-gradient(90deg,#c4c4c4,#c4c4c4 40%,rgba(196,196,196,0));"></div>
<div style="left:1027px;top:738px;width:20px;height:1px;background:linear-gradient(90deg,#c4c4c4,#c4c4c4 40%,rgba(196,196,196,0));"></div>
<div style="left:1027px;top:770px;width:20px;height:1px;background:linear-gradient(90deg,#c4c4c4,#c4c4c4 40%,rgba(196,196,196,0));"></div>
<div style="left:1027px;top:793px;width:20px;height:1px;background:linear-gradient(90deg,#c4c4c4,#c4c4c4 40%,rgba(196,196,196,0));"></div>
<div style="left:1027px;top:820px;width:20px;height:1px;background:linear-gradient(90deg,#c4c4c4,#c4c4c4 40%,rgba(196,196,196,0));"></div>
<div style="left:1027px;top:847px;width:20px;height:1px;background:linear-gradient(90deg,#c4c4c4,#c4c4c4 40%,rgba(196,196,196,0));"></div>
<div class="t" style="top:351.00px;line-height:12px;font-size:9px;color:#333;left:737.50px;width:600px;text-align:center;">1</div>
<div class="t" style="top:383.00px;line-height:12px;font-size:9px;color:#333;left:737.50px;width:600px;text-align:center;">2</div>
<div class="t" style="top:409.00px;line-height:12px;font-size:9px;color:#333;left:737.50px;width:600px;text-align:center;">3</div>
<div class="t" style="top:436.00px;line-height:12px;font-size:9px;color:#333;left:737.50px;width:600px;text-align:center;">4</div>
<div class="t" style="top:576.00px;line-height:12px;font-size:9px;color:#333;left:737.50px;width:600px;text-align:center;">5</div>
<div class="t" style="top:647.00px;line-height:12px;font-size:9px;color:#333;left:737.50px;width:600px;text-align:center;">6</div>
<div class="t" style="top:681.00px;line-height:12px;font-size:9px;color:#333;left:737.50px;width:600px;text-align:center;">7</div>
<div class="t" style="top:716.00px;line-height:12px;font-size:9px;color:#333;left:737.50px;width:600px;text-align:center;">8</div>
<div class="t" style="top:749.00px;line-height:12px;font-size:9px;color:#333;left:737.50px;width:600px;text-align:center;">10</div>
<div class="t" style="top:781.00px;line-height:12px;font-size:9px;color:#333;left:737.50px;width:600px;text-align:center;">11</div>
<div class="t" style="top:807.00px;line-height:12px;font-size:9px;color:#333;left:737.50px;width:600px;text-align:center;">12</div>
<div class="t" style="top:834.00px;line-height:12px;font-size:9px;color:#333;left:737.50px;width:600px;text-align:center;">13</div>
<div class="t" style="top:974.00px;line-height:12px;font-size:9px;color:#333;left:737.50px;width:600px;text-align:center;">14</div>
<div style="left:1027px;top:728px;width:22px;height:9px;overflow:hidden"><div class="t" style="left:-289px;width:600px;text-align:center;top:-1.5px;line-height:12px;font-size:9px;color:#333">9</div></div>
<div style="left:1055px;top:330px;width:19px;height:11px;background:#f3f3f3;"></div>
<div style="left:1074px;top:330px;width:1px;height:656px;background:#a6a6a6;"></div>
<svg style="left:1050px;top:330px" width="25" height="656" viewBox="1050 330 25 656" fill="none" stroke="#8c8c8c" stroke-width="1"><path d="M1072 332.5H1074" stroke="#b4b4b4"/><path d="M1072 349.5H1074" stroke="#b4b4b4"/><path d="M1070 358.5H1074"/><path d="M1072 366.5H1074" stroke="#b4b4b4"/><path d="M1067 375.5H1074"/><path d="M1072 384.5H1074" stroke="#b4b4b4"/><path d="M1070 392.5H1074"/><path d="M1072 401.5H1074" stroke="#b4b4b4"/><path d="M1055 410.5H1074"/><path d="M1072 418.5H1074" stroke="#b4b4b4"/><path d="M1070 427.5H1074"/><path d="M1072 436.5H1074" stroke="#b4b4b4"/><path d="M1067 444.5H1074"/><path d="M1072 453.5H1074" stroke="#b4b4b4"/><path d="M1070 462.5H1074"/><path d="M1072 470.5H1074" stroke="#b4b4b4"/><path d="M1055 479.5H1074"/><path d="M1072 488.5H1074" stroke="#b4b4b4"/><path d="M1070 496.5H1074"/><path d="M1072 505.5H1074" stroke="#b4b4b4"/><path d="M1067 514.5H1074"/><path d="M1072 522.5H1074" stroke="#b4b4b4"/><path d="M1070 531.5H1074"/><path d="M1072 540.5H1074" stroke="#b4b4b4"/><path d="M1055 548.5H1074"/><path d="M1072 557.5H1074" stroke="#b4b4b4"/><path d="M1070 566.5H1074"/><path d="M1072 574.5H1074" stroke="#b4b4b4"/><path d="M1067 583.5H1074"/><path d="M1072 592.5H1074" stroke="#b4b4b4"/><path d="M1070 600.5H1074"/><path d="M1072 609.5H1074" stroke="#b4b4b4"/><path d="M1055 618.5H1074"/><path d="M1072 626.5H1074" stroke="#b4b4b4"/><path d="M1070 635.5H1074"/><path d="M1072 643.5H1074" stroke="#b4b4b4"/><path d="M1067 652.5H1074"/><path d="M1072 661.5H1074" stroke="#b4b4b4"/><path d="M1070 669.5H1074"/><path d="M1072 678.5H1074" stroke="#b4b4b4"/><path d="M1055 687.5H1074"/><path d="M1072 695.5H1074" stroke="#b4b4b4"/><path d="M1070 704.5H1074"/><path d="M1072 713.5H1074" stroke="#b4b4b4"/><path d="M1067 721.5H1074"/><path d="M1072 730.5H1074" stroke="#b4b4b4"/><path d="M1070 739.5H1074"/><path d="M1072 747.5H1074" stroke="#b4b4b4"/><path d="M1055 756.5H1074"/><path d="M1072 765.5H1074" stroke="#b4b4b4"/><path d="M1070 773.5H1074"/><path d="M1072 782.5H1074" stroke="#b4b4b4"/><path d="M1067 791.5H1074"/><path d="M1072 799.5H1074" stroke="#b4b4b4"/><path d="M1070 808.5H1074"/><path d="M1072 817.5H1074" stroke="#b4b4b4"/><path d="M1055 825.5H1074"/><path d="M1072 834.5H1074" stroke="#b4b4b4"/><path d="M1070 843.5H1074"/><path d="M1072 851.5H1074" stroke="#b4b4b4"/><path d="M1067 860.5H1074"/><path d="M1072 869.5H1074" stroke="#b4b4b4"/><path d="M1070 877.5H1074"/><path d="M1072 886.5H1074" stroke="#b4b4b4"/><path d="M1055 895.5H1074"/><path d="M1072 903.5H1074" stroke="#b4b4b4"/><path d="M1070 912.5H1074"/><path d="M1072 921.5H1074" stroke="#b4b4b4"/><path d="M1067 929.5H1074"/><path d="M1072 938.5H1074" stroke="#b4b4b4"/><path d="M1070 947.5H1074"/><path d="M1072 955.5H1074" stroke="#b4b4b4"/><path d="M1055 964.5H1074"/><path d="M1072 973.5H1074" stroke="#b4b4b4"/><path d="M1070 981.5H1074"/></svg>
<div class="t" style="left:1054px;top:408.6px;width:20px;height:12px;line-height:12px;font-size:9px;color:#444;text-align:center;transform:rotate(90deg)">1</div>
<div class="t" style="left:1054px;top:477.9px;width:20px;height:12px;line-height:12px;font-size:9px;color:#444;text-align:center;transform:rotate(90deg)">2</div>
<div class="t" style="left:1054px;top:547.2px;width:20px;height:12px;line-height:12px;font-size:9px;color:#444;text-align:center;transform:rotate(90deg)">3</div>
<div class="t" style="left:1054px;top:616.5px;width:20px;height:12px;line-height:12px;font-size:9px;color:#444;text-align:center;transform:rotate(90deg)">4</div>
<div class="t" style="left:1054px;top:685.8px;width:20px;height:12px;line-height:12px;font-size:9px;color:#444;text-align:center;transform:rotate(90deg)">5</div>
<div class="t" style="left:1054px;top:755.1px;width:20px;height:12px;line-height:12px;font-size:9px;color:#444;text-align:center;transform:rotate(90deg)">6</div>
<div class="t" style="left:1054px;top:824.4px;width:20px;height:12px;line-height:12px;font-size:9px;color:#444;text-align:center;transform:rotate(90deg)">7</div>
<div class="t" style="left:1054px;top:893.7px;width:20px;height:12px;line-height:12px;font-size:9px;color:#444;text-align:center;transform:rotate(90deg)">8</div>
<div class="t" style="left:1054px;top:963.0px;width:20px;height:12px;line-height:12px;font-size:9px;color:#444;text-align:center;transform:rotate(90deg)">9</div>
<div style="left:0px;top:986px;width:1085px;height:31.5px;background:#efefef;"></div>
<svg style="left:853px;top:995px" width="12" height="12" viewBox="0 0 12 12" stroke="#333" stroke-width="1.1"><path d="M0.5 6H11.5M6 0.5V11.5"/></svg>
<div style="left:907px;top:993px;width:1px;height:17.5px;background:#d0d0d0;"></div>
<div style="left:910.5px;top:986px;width:58px;height:28px;background:#fff;border-radius:0 0 5px 5px;box-shadow:0 1px 2px rgba(0,0,0,.18);"></div>
<div class="t" style="top:990.50px;line-height:18px;font-size:13px;color:#222;letter-spacing:-0.327px;left:639.54px;width:600px;text-align:center;font-weight:bold;">Sheet1</div>
<div style="left:919px;top:1009px;width:41.5px;height:2px;background:#107c41;"></div>
<svg style="left:1015px;top:994px" width="45" height="14" viewBox="0 0 45 14" fill="none" stroke="#b9b9b9" stroke-width="1.2"><path d="M8.5 2L3.5 7L8.5 12"/><path d="M36 2L41 7L36 12"/></svg>
<div style="left:0px;top:1017.5px;width:1085px;height:22.5px;background:#f3f3f3;border-top:1px solid #fbfbfb;"></div>
<div style="left:831px;top:1018px;width:40px;height:22px;background:#d8d8d8;"></div>
<svg style="left:803px;top:1021px" width="100" height="16" viewBox="803 1021 100 16" fill="none" stroke="#333" stroke-width="1"><rect x="804.5" y="1022.5" width="12" height="12"/><path d="M804.5 1026.5H816.5M804.5 1030.5H816.5M808.5 1022.5V1034.5M812.5 1022.5V1034.5"/><rect x="844.5" y="1022.5" width="13" height="12.5"/><rect x="847.5" y="1025.5" width="7" height="6.5" stroke-width=".9"/><path d="M849 1027.5H853M849 1029.5H853" stroke-width=".8"/><rect x="884.5" y="1022.5" width="13.5" height="12.5"/><path d="M890.5 1022.5V1028.5M884.5 1028.5H898" /></svg>
<svg style="left:915px;top:1021px" width="130" height="16" viewBox="915 1021 130 16" fill="none" stroke="#444" stroke-width="1"><path d="M917.5 1029H924"/><path d="M930 1029H1029.5"/><path d="M980.5 1026V1032"/><path d="M1034.5 1029H1042M1038.3 1025.2V1032.8"/><rect x="962" y="1023.8" width="5" height="11.2" fill="#606060" stroke="none"/></svg>
<div class="t" style="top:1021.50px;line-height:16px;font-size:11.5px;color:#333;letter-spacing:-1.009px;right:9.01px;text-align:right;">70%</div>
<div style="left:0px;top:1040px;width:1085px;height:40px;background:linear-gradient(90deg,#ecdbce 0%,#ead8cb 45%,#ecdbcf 78%,#efe1d8 90%,#f4eae4 100%);"></div>
<svg style="left:708px;top:1047px" width="26" height="26" viewBox="0 0 26 26"><defs><radialGradient id="sun" cx="45%" cy="35%" r="70%"><stop offset="0" stop-color="#ffc533"/><stop offset=".6" stop-color="#f99a16"/><stop offset="1" stop-color="#e96a0c"/></radialGradient></defs><circle cx="12.9" cy="13.4" r="10.3" fill="url(#sun)"/></svg>
<div style="left:1081px;top:1040px;width:1px;height:40px;background:#cfc3bb;"></div>
<div class="t" style="top:1050.50px;line-height:20px;font-size:14px;color:#1f1f1f;letter-spacing:-1.127px;left:741.50px;text-align:left;">30°C</div>
<div class="t" style="top:1050.50px;line-height:20px;font-size:14px;color:#1f1f1f;letter-spacing:-0.499px;left:779.50px;text-align:left;">Sunny</div>
<svg style="left:840px;top:1050px" width="100" height="20" viewBox="840 1050 100 20" fill="none" stroke="#1f1f1f" stroke-width="1.35" stroke-linecap="round" stroke-linejoin="round"><path d="M842.5 1063L848 1057.5L853.5 1063"/><rect x="867.5" y="1056" width="7" height="8" rx="1.5"/><path d="M874.5 1059L877.5 1057V1063L874.5 1061"/><path d="M867 1054Q872 1051 877 1054M867 1066Q872 1069 877 1066" stroke-width="1"/><path d="M891 1066.5Q891 1055 902.5 1055M894.5 1066.5Q894.5 1058.5 902.5 1058.5M898 1066.5Q898 1062 902.5 1062" stroke-width="1.1"/><circle cx="901.5" cy="1065.5" r="1.1" fill="#1f1f1f" stroke="none"/><path d="M913 1058H915.5L919.5 1054.5V1066L915.5 1062.5H913Z"/><path d="M922.5 1057.5Q924.5 1060.2 922.5 1063M925 1055.5Q928.5 1060.2 925 1065M927.8 1053.8Q932.5 1060.2 927.8 1066.5" stroke-width="1"/></svg>
<div class="t fa" style="top:1051.00px;line-height:18px;font-size:12px;color:#1f1f1f;left:650.00px;width:600px;text-align:center;font-family:"DejaVu Sans",sans-serif;">فا</div>
<div class="t" style="top:1043.00px;line-height:17px;font-size:12px;color:#1f1f1f;letter-spacing:-0.532px;left:700.13px;width:600px;text-align:center;">1:14 PM</div>
<div class="t" style="top:1061.00px;line-height:17px;font-size:12px;color:#1f1f1f;letter-spacing:-0.284px;left:700.06px;width:600px;text-align:center;">10/10/2025</div>
<svg style="left:1042px;top:1049px" width="28" height="28" viewBox="0 0 28 28"><path d="M2.5 2.5H17.5V14.5H8L4.5 18V14.5H2.5Z" fill="#1f1f1f"/><path d="M5 6H15M5 8.5H15M5 11H12" stroke="#efe3dc" stroke-width="1"/><circle cx="17.1" cy="18.5" r="7.7" fill="#d9d3d0" stroke="#5a5a5a" stroke-width="1"/><text x="17" y="22.5" text-anchor="middle" font-family="Liberation Sans,sans-serif" font-size="11" font-weight="bold" fill="#1f1f1f">1</text></svg>
</body></html>
